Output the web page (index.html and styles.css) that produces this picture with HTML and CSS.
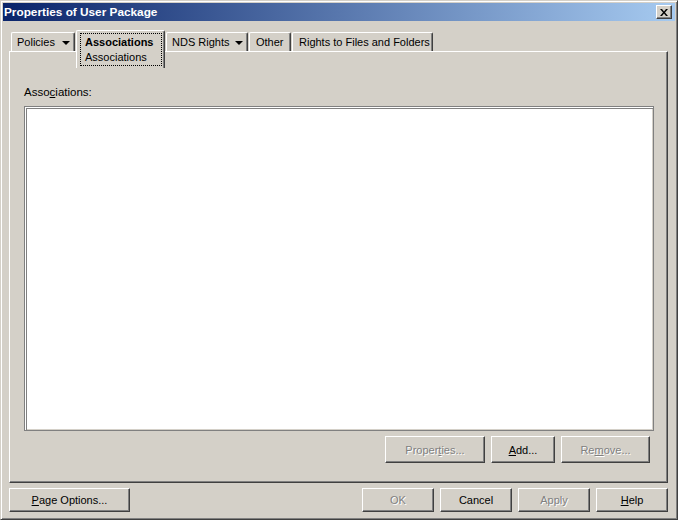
FILE: index.html
```html
<!DOCTYPE html>
<html>
<head>
<meta charset="utf-8">
<title>Properties of User Package</title>
<link rel="stylesheet" href="styles.css">
</head>
<body>
<div class="window">
  <div class="titlebar">
    <span class="title">Properties of User Package</span>
    <button class="close" aria-label="Close">
      <svg width="8" height="7" viewBox="0 0 8 7"><path d="M0 0h2l2 2.5L6 0h2L5 3.5 8 7H6L4 4.5 2 7H0l3-3.5z" fill="#000"/></svg>
    </button>
  </div>
  <div class="body">
    <div class="tabs">
      <div class="tab tab-policies">Policies <span class="arrow"></span></div>
      <div class="tab tab-selected">
        <div class="focus">
          <div class="tab-main">Associations</div>
          <div class="tab-sub">Associations</div>
        </div>
      </div>
      <div class="tab tab-nds">NDS Rights <span class="arrow arrow-nds"></span></div>
      <div class="tab tab-other">Other</div>
      <div class="tab tab-rights">Rights to Files and Folders</div>
    </div>
    <div class="panel">
      <div class="label">Asso<u>c</u>iations:</div>
      <div class="listbox"></div>
      <div class="panel-buttons">
        <button class="btn btn-props disabled">Proper<u>t</u>ies...</button>
        <button class="btn btn-add"><u>A</u>dd...</button>
        <button class="btn btn-remove disabled">Re<u>m</u>ove...</button>
      </div>
    </div>
    <div class="footer">
      <button class="btn btn-page"><u>P</u>age Options...</button>
      <div class="footer-right">
        <button class="btn btn-foot disabled">OK</button>
        <button class="btn btn-foot">Cancel</button>
        <button class="btn btn-foot disabled">Apply</button>
        <button class="btn btn-foot"><u>H</u>elp</button>
      </div>
    </div>
  </div>
</div>
</body>
</html>
```
FILE: styles.css
```css
html, body {
  margin: 0;
  padding: 0;
  background: #d4d0c8;
}
body {
  font-family: "Liberation Sans", Arial, sans-serif;
  font-size: 11px;
  color: #000;
}
.window {
  width: 678px;
  height: 520px;
  box-sizing: border-box;
  background: #d4d0c8;
  border: 1px solid;
  border-color: #d4d0c8 #404040 #404040 #d4d0c8;
  box-shadow: inset 1px 1px 0 #fff, inset -1px -1px 0 #808080;
  padding: 2px;
  display: flex;
  flex-direction: column;
}
.titlebar {
  height: 18px;
  flex: none;
  display: flex;
  align-items: center;
  justify-content: space-between;
  padding: 0 3px 0 1px;
  background: linear-gradient(to right, #0a246a, #a6caf0);
}
.title {
  color: #fff;
  font-weight: bold;
  font-size: 11.8px;
}
.close {
  width: 16px;
  height: 14px;
  box-sizing: border-box;
  padding: 0;
  margin: 0;
  background: #d4d0c8;
  border: 1px solid;
  border-color: #fff #404040 #404040 #fff;
  box-shadow: inset -1px -1px 0 #808080;
  display: flex;
  align-items: center;
  justify-content: center;
}
.close svg { display: block; }
.body {
  flex: 1;
  display: flex;
  flex-direction: column;
  padding: 9px 7px 0 6px;
}
.tabs {
  display: flex;
  align-items: flex-start;
  height: 21px;
  padding-left: 2px;
  position: relative;
  z-index: 1;
}
.tab {
  box-sizing: border-box;
  height: 19px;
  margin-top: 2px;
  margin-left: 1px;
  border-top: 1px solid #fff;
  border-left: 1px solid #fff;
  border-right: 1px solid #404040;
  border-radius: 2px 2px 0 0;
  box-shadow: inset -1px 0 0 #808080;
  padding: 3px 0 0 5px;
  white-space: nowrap;
  display: flex;
  align-items: flex-start;
}
.tab-policies { width: 64px; margin-left: 0; }
.tab-nds { width: 82px; }
.tab-other { width: 42px; padding-left: 6px; }
.tab-rights { width: 141px; padding-left: 6px; }
.arrow {
  display: inline-block;
  width: 0;
  height: 0;
  border-left: 4px solid transparent;
  border-right: 4px solid transparent;
  border-top: 4px solid #000;
  margin: 5px 0 0 7px;
}
.arrow-nds { margin-left: 6px; }
.tab-selected {
  width: 89px;
  height: 38px;
  margin-top: 0;
  background: #d4d0c8;
  padding: 2px 0 0 3px;
}
.focus {
  width: 82px;
  height: 33px;
  box-sizing: border-box;
  border: 1px dotted #000;
  padding: 2px 0 0 4px;
}
.tab-main {
  font-weight: bold;
  line-height: 13px;
}
.tab-sub {
  line-height: 13px;
  margin-top: 2px;
}
.panel {
  width: 659px;
  height: 432px;
  box-sizing: border-box;
  border: 1px solid;
  border-color: #fff #404040 #404040 #fff;
  box-shadow: inset -1px -1px 0 #808080;
  display: flex;
  flex-direction: column;
  padding: 34px 13px 0 14px;
}
.label {
  line-height: 13px;
  height: 13px;
  font-size: 11.5px;
}
.listbox {
  margin-top: 7px;
  width: 630px;
  height: 325px;
  box-sizing: border-box;
  background: #fff;
  border: 1px solid #808080;
  box-shadow: inset 1px 1px 0 #fff, inset 2px 2px 0 #808080, inset -1px -1px 0 #d4d0c8;
}
.panel-buttons {
  display: flex;
  justify-content: flex-end;
  gap: 6px;
  margin-top: 5px;
  padding-right: 4px;
}
.btn {
  font-family: "Liberation Sans", Arial, sans-serif;
  font-size: 11px;
  color: #000;
  background: #d4d0c8;
  box-sizing: border-box;
  margin: 0;
  padding: 0;
  border: 1px solid;
  border-color: #fff #404040 #404040 #fff;
  box-shadow: inset -1px -1px 0 #808080;
  text-align: center;
}
.btn.disabled {
  color: #808080;
  text-shadow: 1px 1px 0 #fff;
}
.btn-props { width: 100px; height: 27px; }
.btn-add { width: 64px; height: 27px; }
.btn-remove { width: 89px; height: 27px; }
.footer {
  display: flex;
  justify-content: space-between;
  margin-top: 5px;
}
.btn-page { width: 121px; height: 24px; }
.footer-right {
  display: flex;
  gap: 6px;
}
.btn-foot { width: 72px; height: 24px; }
```
